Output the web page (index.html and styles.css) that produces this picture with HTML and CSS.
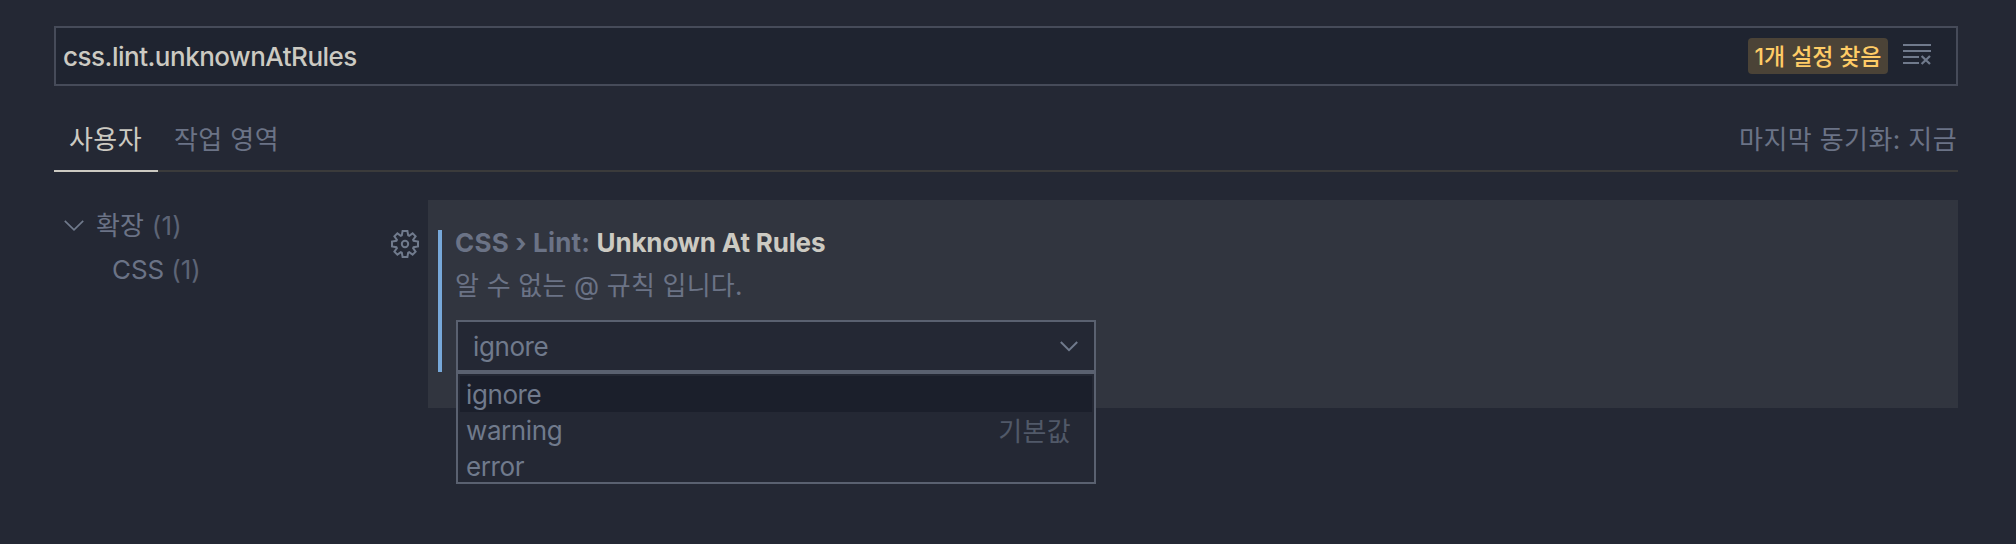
FILE: index.html
```html
<!DOCTYPE html>
<html lang="ko">
<head>
<meta charset="utf-8">
<title>설정</title>
<link rel="stylesheet" href="styles.css">
</head>
<body>
<main class="settings">
  <div class="search">
    <span class="query">css.lint.unknownAtRules</span>
    <span class="badge">1개 설정 찾음</span>
    <svg class="clear" width="28" height="21" viewBox="0 0 28 21"><path d="M0 1H28M0 7H28M0 13H16M0 19H16" stroke-width="2"/><path d="M18.6 12L27 20M27 12L18.6 20" stroke-width="2.3"/></svg>
  </div>
  <nav class="tabs">
    <span class="tab active">사용자</span>
    <span class="tab">작업 영역</span>
    <span class="sync">마지막 동기화: 지금</span>
  </nav>
  <div class="body">
    <aside class="tree">
      <div class="node"><svg class="twisty" width="20" height="11" viewBox="0 0 20 11"><path d="M.8 .8L10 9.8L19.2 .8" stroke-width="1.7"/></svg><span class="name">확장 <span class="count">(1)</span></span></div>
      <div class="node child"><span class="name">CSS <span class="count">(1)</span></span></div>
    </aside>
    <svg class="gear" width="28" height="28" viewBox="-14 -14 28 28"><path d="M-2.4 -13H2.4L3.2 -8.6L4.2 -8.1L7.6 -10.6L10.6 -7.6L8.1 -4.2L8.6 -3.2L13 -2.4V2.4L8.6 3.2L8.1 4.2L10.6 7.6L7.6 10.6L4.2 8.1L3.2 8.6L2.4 13H-2.4L-3.2 8.6L-4.2 8.1L-7.6 10.6L-10.6 7.6L-8.1 4.2L-8.6 3.2L-13 2.4V-2.4L-8.6 -3.2L-8.1 -4.2L-10.6 -7.6L-7.6 -10.6L-4.2 -8.1L-3.2 -8.6Z" stroke-width="2"/><circle r="3.2" stroke-width="2"/></svg>
    <section class="card">
      <div class="setting">
        <h1 class="title"><span class="category">CSS › Lint: </span><span class="label">Unknown At Rules</span></h1>
        <p class="description">알 수 없는 @ 규칙 입니다.</p>
        <div class="select">
          <span class="value">ignore</span>
          <svg class="chevron" width="18" height="11" viewBox="0 0 18 11"><path d="M.8 1L9 9.2L17.2 1" stroke-width="2"/></svg>
          <div class="menu">
            <div class="option selected"><span class="value">ignore</span></div>
            <div class="option"><span class="value">warning</span><span class="default">기본값</span></div>
            <div class="option"><span class="value">error</span></div>
          </div>
        </div>
      </div>
    </section>
  </div>
</main>
</body>
</html>
```
FILE: styles.css
```css
* { box-sizing: border-box; }
body {
  margin: 0;
  height: 544px;
  overflow: hidden;
  background: #242834;
  color: #6b7386;
  font: 26px/36px Inter, "Noto Sans CJK KR", sans-serif;
}
svg { fill: none; stroke: #707a8c; flex: none; }
span { white-space: nowrap; }
.settings { padding: 26px 58px 0 54px; }
.search {
  display: flex;
  align-items: center;
  height: 60px;
  padding: 0 25px 0 7px;
  border: 2px solid #464b59;
  background: #1f2430;
}
.query {
  flex: 1;
  padding-top: 2px;
  color: #cccac2;
  font-weight: 450;
  letter-spacing: -.5px;
}
.badge {
  width: 140px;
  height: 36px;
  margin: 0 15px 0 0;
  border-radius: 4px;
  background: #4b4337;
  color: #ffcc66;
  font-size: 23px;
  font-weight: 450;
  line-height: 38px;
  letter-spacing: -.1px;
  text-align: center;
}
.clear { margin-bottom: 3px; }
.tabs {
  display: flex;
  height: 86px;
  border-bottom: 2px solid #3b3b3b;
  letter-spacing: .4px;
}
.tab {
  height: 86px;
  padding: 36px 16px 0;
}
.active {
  width: 104px;
  padding-left: 15px;
  border-bottom: 2px solid #cccac2;
  color: #cccac2;
}
.sync { margin-left: auto; padding: 36px 1px 0 0; }
.body { display: flex; padding-top: 28px; }
.tree { width: 337px; padding: 3px 0 0 10px; }
.node { display: flex; align-items: center; height: 44px; letter-spacing: .2px; }
.twisty { margin-right: 12px; }
.name { padding-top: 1px; }
.child { padding-left: 48px; letter-spacing: -.1px; }
.count { opacity: .8; }
.gear { margin: 30px 9px 0 0; }
.card { flex: 1; height: 208px; padding: 30px 10px; background: #31353f; }
.setting {
  height: 142px;
  padding-left: 14px;
  border-left: 4px solid #77a8d9;
}
.title {
  margin: 0 0 0 -1px;
  font-size: 26px;
  line-height: 26px;
  font-weight: 650;
}
.title span { white-space: pre; }
.category { letter-spacing: .2px; }
.label { color: #cccac2; letter-spacing: -.15px; }
.description { margin: 12px 0 16px -1px; letter-spacing: .2px; }
.select {
  position: relative;
  display: flex;
  align-items: center;
  justify-content: space-between;
  width: 640px;
  height: 52px;
  padding: 0 16px 0 15px;
  border: 2px solid #5a6170;
  background: #242834;
  color: #707a8c;
}
.value { padding-top: 1px; letter-spacing: -.4px; }
.menu {
  position: absolute;
  top: 50px;
  left: -2px;
  width: 640px;
  height: 112px;
  padding: 2px;
  overflow: hidden;
  border: 2px solid #5a6170;
  background: #242834;
}
.option {
  display: flex;
  justify-content: space-between;
  height: 36px;
  padding: 0 21px 0 6px;
}
.selected { background: #1b1f2b; }
.default { padding-top: 2px; letter-spacing: .3px; opacity: .6; }
```
